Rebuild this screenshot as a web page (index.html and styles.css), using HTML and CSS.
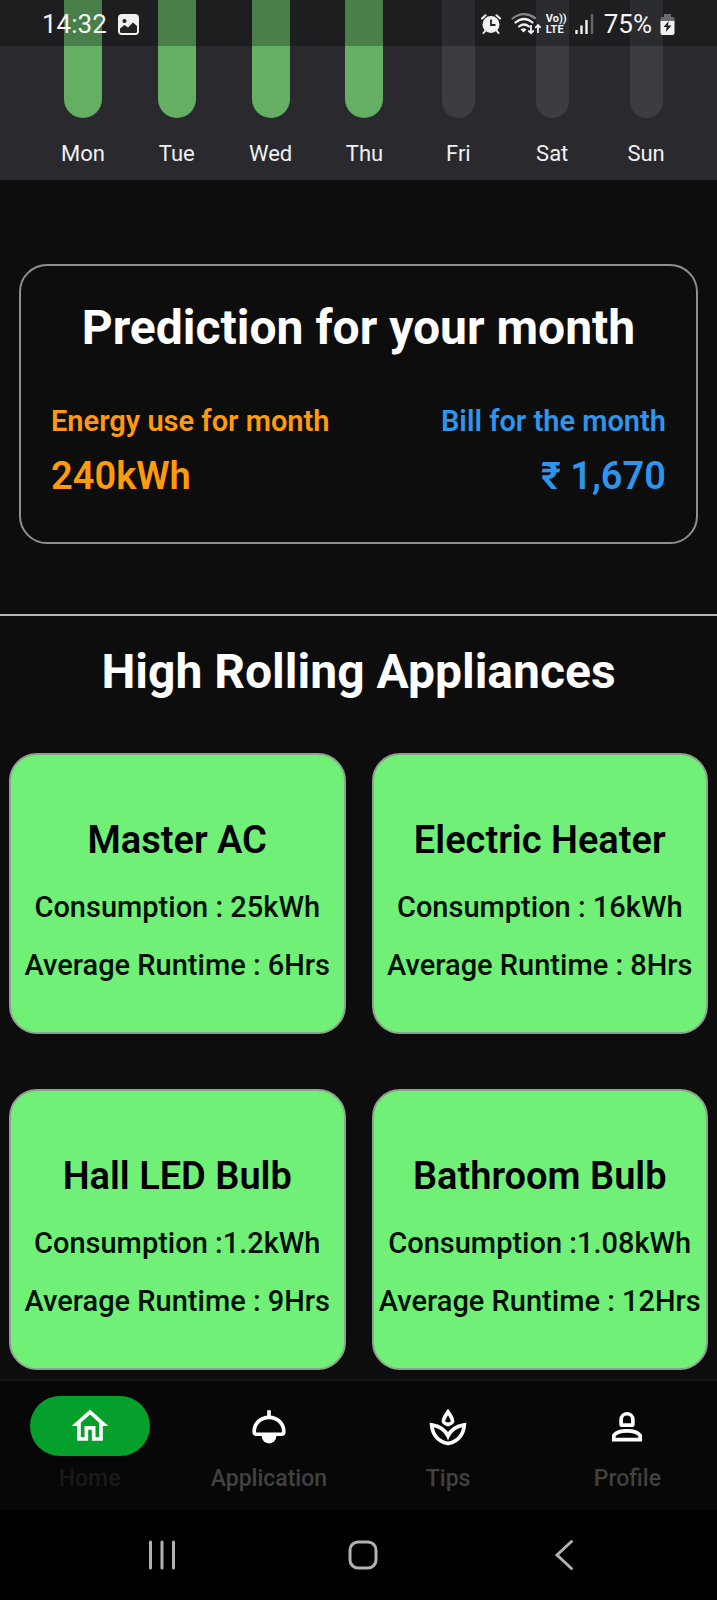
FILE: index.html
```html
<!DOCTYPE html>
<html lang="en">
<head>
<meta charset="utf-8">
<meta name="viewport" content="width=device-width, initial-scale=1">
<title>Energy dashboard</title>
<link rel="stylesheet" href="styles.css">
</head>
<body>
<header class="status-bar">
  <div class="status-group">
    <span class="status-text">14:32</span>
    <svg class="status-photo" width="21" height="21" viewBox="0 0 21 21" aria-hidden="true">
      <rect width="21" height="21" rx="4" fill="#f1f1f1"/>
      <circle cx="6.5" cy="7" r="2.1" fill="#222"/>
      <path d="M2 14.5 6.500 11l3.500 2.500L15 8.500l4 3.500v5.500q0 1.500-1.500 1.500h-14Q2 19 2 17.500z" fill="#222"/>
    </svg>
  </div>
  <div class="status-group">
    <svg width="20" height="20" viewBox="0 0 20 20" aria-hidden="true">
      <g stroke="#f1f1f1" stroke-width="2" stroke-linecap="round" fill="none"><path d="M1 4.500 4.500 1.200M19 4.500 15.500 1.200M4.500 16.500 2.500 19M15.500 16.500l2 2.500"/></g>
      <circle cx="10" cy="10.500" r="8.500" fill="#f1f1f1"/>
      <path d="M10 5.500v5.500h4.500" stroke="#222" stroke-width="1.800" fill="none"/>
    </svg>
    <svg class="status-wifi" width="30" height="22" viewBox="0 0 30 22" aria-hidden="true">
      <g fill="none" stroke="#f1f1f1" stroke-width="2.200" stroke-linecap="round">
        <path d="M1.500 5.500Q12.500-3 24 5" stroke="#858587"/>
        <path d="M4.500 9.500q8.500-7 17 0M8 13.500q5-4 10 0"/>
      </g>
      <path d="m9.500 16.500q3-2.500 6 0l-3 3z" fill="#f1f1f1"/>
      <path d="M20 12v8M17.200 17.500 20 20.300l2.800-2.800M27 20v-8M24.200 14.800 27 12l2.800 2.800" fill="none" stroke="#f1f1f1" stroke-width="1.800"/>
    </svg>
    <span class="volte"><span>Vo))</span><span>LTE</span></span>
    <svg class="status-signal" width="19" height="20" viewBox="0 0 19 20" aria-hidden="true">
      <path d="M1.500 16v4M6.500 11.500V20M11.500 6v14" stroke="#f1f1f1" stroke-width="2.400"/><path d="M17 0v20" stroke="#67676a" stroke-width="2.400"/>
    </svg>
    <span class="status-text">75%</span>
    <svg class="status-battery" width="15" height="21" viewBox="0 0 15 21" aria-hidden="true">
      <path d="M4 0h7v3h2q1.500 0 1.500 1.500V9H.5V4.500Q.5 3 2 3h2z" fill="#6b6b6d"/>
      <path d="M.5 7h14v12q0 2-2 2h-10q-2 0-2-2z" fill="#f1f1f1"/>
      <path d="M8.800 7 3.500 13h3.200l-.9 5 5.700-6.500H8z" fill="#222"/>
    </svg>
  </div>
</header>

<main class="content">
  <section class="chart" aria-label="Weekly usage">
    <div class="day"><span class="bar bar-on"></span><span>Mon</span></div>
    <div class="day"><span class="bar bar-on"></span><span>Tue</span></div>
    <div class="day"><span class="bar bar-on"></span><span>Wed</span></div>
    <div class="day"><span class="bar bar-on"></span><span>Thu</span></div>
    <div class="day"><span class="bar"></span><span>Fri</span></div>
    <div class="day"><span class="bar"></span><span>Sat</span></div>
    <div class="day"><span class="bar"></span><span>Sun</span></div>
  </section>

  <section class="prediction">
    <h2 class="heading">Prediction for your month</h2>
    <div class="figures">
      <div class="figure energy">
        <span class="figure-label">Energy use for month</span>
        <strong class="figure-value">240kWh</strong>
      </div>
      <div class="figure bill">
        <span class="figure-label">Bill for the month</span>
        <strong class="figure-value">₹ 1,670</strong>
      </div>
    </div>
  </section>

  <section class="appliances">
    <h2 class="heading">High Rolling Appliances</h2>
    <div class="appliance-grid">
      <article class="appliance">
        <h3>Master AC</h3>
        <p>Consumption : 25kWh</p>
        <p>Average Runtime : 6Hrs</p>
      </article>
      <article class="appliance">
        <h3>Electric Heater</h3>
        <p>Consumption : 16kWh</p>
        <p>Average Runtime : 8Hrs</p>
      </article>
      <article class="appliance">
        <h3>Hall LED Bulb</h3>
        <p>Consumption :1.2kWh</p>
        <p>Average Runtime : 9Hrs</p>
      </article>
      <article class="appliance">
        <h3>Bathroom Bulb</h3>
        <p>Consumption :1.08kWh</p>
        <p>Average Runtime : 12Hrs</p>
      </article>
    </div>
  </section>
</main>

<footer class="bottom">
  <nav class="tabs" aria-label="Main">
    <button class="tab tab-active" type="button" aria-current="page">
      <span class="tab-icon"><svg viewBox="0 0 24 24" fill="#fff" aria-hidden="true"><path d="M12 5.690l5 4.500V18h-2v-6H9v6H7v-7.810l5-4.500M12 3L2 12h3v8h6v-6h2v6h6v-8h3L12 3z"/></svg></span>
      <span>Home</span>
    </button>
    <button class="tab" type="button">
      <span class="tab-icon"><svg viewBox="0 0 24 24" fill="none" stroke="#fff" stroke-width="2" aria-hidden="true"><path d="M12 3.400v4"/><path d="M3.900 15.200C3.900 10.500 7.500 7.300 12 7.300s8.100 3.200 8.100 7.900c0 .9-.5 1.300-1.300 1.300H5.200c-.8 0-1.300-.4-1.300-1.300z"/><path d="M8 17h8v.5a4 4 0 0 1-8 0z" fill="#fff" stroke="none"/></svg></span>
      <span>Application</span>
    </button>
    <button class="tab" type="button">
      <span class="tab-icon"><svg viewBox="0 0 24 24" fill="none" stroke="#fff" stroke-width="2" aria-hidden="true"><path d="M12 4.300C10.700 6.200 9.500 8 9.500 9.400c0 .7.900 1.300 2.500 1.800 1.600-.5 2.500-1.100 2.500-1.800 0-1.400-1.200-3.200-2.500-5.100z"/><path d="M3.100 11.400C3.500 17 7 20.800 12 21.500c5-.7 8.500-4.500 8.900-10.100-3.900.6-7.400 2.800-8.900 6.100-1.500-3.300-5-5.500-8.900-6.100z"/></svg></span>
      <span>Tips</span>
    </button>
    <button class="tab" type="button">
      <span class="tab-icon"><svg viewBox="0 0 24 24" fill="none" stroke="#fff" stroke-width="2" aria-hidden="true"><path stroke-linejoin="round" d="M8.800 11.500V8.600c0-4.400 6.400-4.400 6.400 0v2.900z"/><path d="M4.800 19.400v-2.200c1.200-1.700 4.200-2.500 7.200-2.500s6 .8 7.200 2.500v2.200z"/></svg></span>
      <span>Profile</span>
    </button>
  </nav>
  <div class="system-nav">
    <button type="button" aria-label="Recent apps"><svg viewBox="0 0 32 32" aria-hidden="true"><path d="M4.500 3v26M16 3v26M27.500 3v26"/></svg></button>
    <button type="button" aria-label="Home screen"><svg viewBox="0 0 32 32" aria-hidden="true"><rect x="3" y="3" width="26" height="26" rx="8"/></svg></button>
    <button type="button" aria-label="Back"><svg viewBox="0 0 32 32" aria-hidden="true"><path d="M23.500 2.500 9 16l14.500 13.500"/></svg></button>
  </div>
</footer>
</body>
</html>
```

FILE: styles.css
```css
* {
  box-sizing: border-box;
}

body {
  margin: 0;
  min-height: 100vh;
  display: flex;
  flex-direction: column;
  background: #0d0d0d;
  color: #fff;
  font-family: Roboto, "Noto Sans", sans-serif;
}

h2,
h3,
p {
  margin: 0;
}

button {
  margin: 0;
  padding: 0;
  border: 0;
  background: none;
  font: inherit;
  color: inherit;
}

/* Translucent system bar lying over the scrolled content */
.status-bar {
  position: absolute;
  top: 0;
  left: 0;
  right: 0;
  height: 46px;
  padding: 2px 42px 0;
  display: flex;
  justify-content: space-between;
  align-items: center;
  background: rgba(0, 0, 0, 0.27);
  color: #f5f5f5;
}

.status-group {
  display: flex;
  align-items: center;
}

.status-text {
  font-size: 26px;
  line-height: 32px;
}

.status-photo {
  margin-left: 11px;
}

.status-wifi {
  margin-left: 10px;
}

.volte {
  display: flex;
  flex-direction: column;
  margin-left: 5px;
  font-size: 11px;
  font-weight: 700;
  line-height: 11px;
}

.status-signal {
  margin-left: 8px;
}

.status-signal + .status-text {
  margin-left: 10px;
}

.status-battery {
  margin-left: 8px;
}

.content {
  flex: 1;
}

.chart {
  display: grid;
  grid-template-columns: repeat(7, 1fr);
  padding: 0 24px 13px 36px;
  background: #2a2a2e;
}

.day {
  display: flex;
  flex-direction: column;
  align-items: center;
  gap: 23px;
  color: #f0f0f4;
  font-size: 22px;
  line-height: 26px;
}

.bar {
  width: 33px;
  height: 118px;
  border-radius: 0 0 17px 17px;
  background: #3c3d42;
}

.bar-on {
  width: 38px;
  border-radius: 0 0 19px 19px;
  background: #64af64;
}

.heading {
  font-size: 48px;
  font-weight: 700;
  line-height: 56px;
  text-align: center;
}

.prediction {
  margin: 84px 19px 70px;
  padding: 34px 30px 44px;
  border: 2px solid #8f8f8f;
  border-radius: 28px;
}

.figures {
  display: flex;
  justify-content: space-between;
  margin-top: 48px;
}

.figure {
  display: flex;
  flex-direction: column;
  gap: 16px;
  font-weight: 600;
}

.figure-label {
  font-size: 29px;
  line-height: 34px;
}

.figure-value {
  font-size: 38px;
  font-weight: 600;
  line-height: 44px;
}

.energy {
  color: #ff9a0c;
}

.bill {
  color: #2d95ec;
  text-align: right;
}

.appliances {
  padding: 28px 9px 9px;
  border-top: 2px solid #b4b5af;
}

.appliance-grid {
  display: grid;
  grid-template-columns: 1fr 1fr;
  gap: 55px 26px;
  margin-top: 53px;
}

.appliance {
  padding: 63px 0 50px;
  border: 2px solid #8fa28f;
  border-radius: 28px;
  background: #70f076;
  color: #031003;
  text-align: center;
}

.appliance h3 {
  font-size: 38px;
  font-weight: 600;
  line-height: 44px;
  color: #000;
}

.appliance p {
  margin-top: 24px;
  font-size: 29px;
  font-weight: 500;
  line-height: 34px;
}

.appliance h3 + p {
  margin-top: 28px;
}

.bottom {
  position: sticky;
  bottom: 0;
}

.tabs {
  display: grid;
  grid-template-columns: repeat(4, 1fr);
  padding: 15px 0 18px;
  border-top: 2px solid #151515;
  background: #070707;
}

.tab {
  display: flex;
  flex-direction: column;
  align-items: center;
  gap: 10px;
  color: #41413e;
  font-size: 23px;
  font-weight: 500;
  line-height: 26px;
}

.tab-icon {
  display: flex;
  justify-content: center;
  align-items: center;
  width: 120px;
  height: 60px;
  border-radius: 30px;
}

.tab-icon svg {
  width: 44px;
  height: 44px;
}

.tab-active {
  color: #1a1a18;
}

.tab-active .tab-icon {
  background: #059f2b;
}

.system-nav {
  display: grid;
  grid-template-columns: repeat(3, 1fr);
  justify-items: center;
  padding: 29px 53px 29px 61px;
  background: #000;
}

.system-nav button,
.system-nav svg {
  display: block;
  width: 32px;
  height: 32px;
}

.system-nav svg {
  fill: none;
  stroke: #b2b2b2;
  stroke-width: 3;
  stroke-linecap: round;
}
```
